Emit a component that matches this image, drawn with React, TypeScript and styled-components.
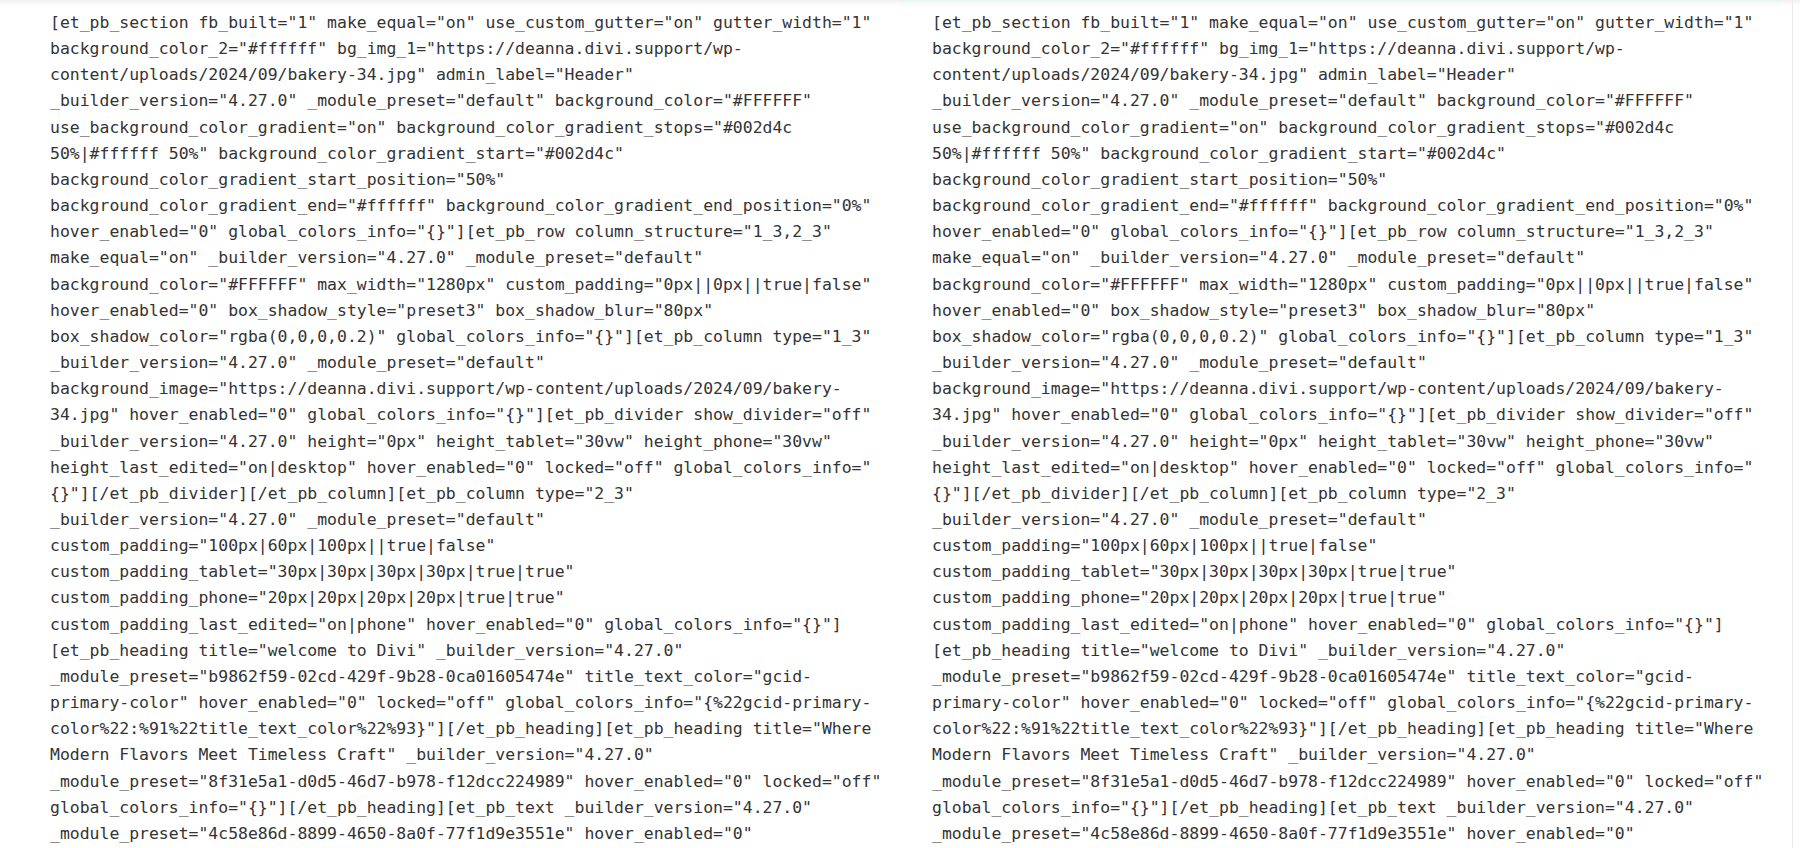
import React from "react";
import styled, { createGlobalStyle } from "styled-components";

const GlobalStyle = createGlobalStyle`
  html, body {
    margin: 0;
    padding: 0;
    background: #ffffff;
  }
  body {
    font-family: "DejaVu Sans Mono", monospace;
  }
`;

const Page = styled.div`
  position: relative;
  display: flex;
  width: 1800px;
  height: 848px;
  overflow: hidden;
  background: linear-gradient(to bottom, #f1f1f1 0px, #fdfdfd 5px, #ffffff 8px);
`;

const Panel = styled.div<{ $width: number; $padLeft: number; $tinted?: boolean }>`
  position: relative;
  box-sizing: border-box;
  width: ${(p) => p.$width}px;
  flex: none;
  padding: 10px 0 0 ${(p) => p.$padLeft}px;
  background: ${(p) =>
    p.$tinted
      ? "linear-gradient(to bottom, #e9f5f1 0px, #f6fbf9 4px, #ffffff 8px)"
      : "transparent"};
  border-radius: ${(p) => (p.$tinted ? "0 0 6px 6px" : "0")};
`;

const EdgeLine = styled.div`
  flex: none;
  margin-left: auto;
  margin-right: 7px;
  width: 1px;
  background: #ececec;
`;

const Code = styled.pre`
  margin: 0;
  font-family: "DejaVu Sans Mono", "Liberation Mono", monospace;
  font-size: 16.45px;
  line-height: 26.15px;
  color: #333333;
  white-space: pre;
`;

const Line = styled.span`
  display: block;
`;

const LINES = [
  `[et_pb_section fb_built="1" make_equal="on" use_custom_gutter="on" gutter_width="1"`,
  `background_color_2="#ffffff" bg_img_1="https://deanna.divi.support/wp-`,
  `content/uploads/2024/09/bakery-34.jpg" admin_label="Header"`,
  `_builder_version="4.27.0" _module_preset="default" background_color="#FFFFFF"`,
  `use_background_color_gradient="on" background_color_gradient_stops="#002d4c`,
  `50%|#ffffff 50%" background_color_gradient_start="#002d4c"`,
  `background_color_gradient_start_position="50%"`,
  `background_color_gradient_end="#ffffff" background_color_gradient_end_position="0%"`,
  `hover_enabled="0" global_colors_info="{}"][et_pb_row column_structure="1_3,2_3"`,
  `make_equal="on" _builder_version="4.27.0" _module_preset="default"`,
  `background_color="#FFFFFF" max_width="1280px" custom_padding="0px||0px||true|false"`,
  `hover_enabled="0" box_shadow_style="preset3" box_shadow_blur="80px"`,
  `box_shadow_color="rgba(0,0,0,0.2)" global_colors_info="{}"][et_pb_column type="1_3"`,
  `_builder_version="4.27.0" _module_preset="default"`,
  `background_image="https://deanna.divi.support/wp-content/uploads/2024/09/bakery-`,
  `34.jpg" hover_enabled="0" global_colors_info="{}"][et_pb_divider show_divider="off"`,
  `_builder_version="4.27.0" height="0px" height_tablet="30vw" height_phone="30vw"`,
  `height_last_edited="on|desktop" hover_enabled="0" locked="off" global_colors_info="`,
  `{}"][/et_pb_divider][/et_pb_column][et_pb_column type="2_3"`,
  `_builder_version="4.27.0" _module_preset="default"`,
  `custom_padding="100px|60px|100px||true|false"`,
  `custom_padding_tablet="30px|30px|30px|30px|true|true"`,
  `custom_padding_phone="20px|20px|20px|20px|true|true"`,
  `custom_padding_last_edited="on|phone" hover_enabled="0" global_colors_info="{}"]`,
  `[et_pb_heading title="welcome to Divi" _builder_version="4.27.0"`,
  `_module_preset="b9862f59-02cd-429f-9b28-0ca01605474e" title_text_color="gcid-`,
  `primary-color" hover_enabled="0" locked="off" global_colors_info="{%22gcid-primary-`,
  `color%22:%91%22title_text_color%22%93}"][/et_pb_heading][et_pb_heading title="Where`,
  `Modern Flavors Meet Timeless Craft" _builder_version="4.27.0"`,
  `_module_preset="8f31e5a1-d0d5-46d7-b978-f12dcc224989" hover_enabled="0" locked="off"`,
  `global_colors_info="{}"][/et_pb_heading][et_pb_text _builder_version="4.27.0"`,
  `_module_preset="4c58e86d-8899-4650-8a0f-77f1d9e3551e" hover_enabled="0"`,
];

const CodeBlock: React.FC = () => (
  <Code>
    {LINES.map((l, i) => (
      <Line key={i}>{l}</Line>
    ))}
  </Code>
);

export default function App() {
  return (
    <>
      <GlobalStyle />
      <Page>
        <Panel $width={900} $padLeft={50}>
          <CodeBlock />
        </Panel>
        <Panel $width={880} $padLeft={32} $tinted>
          <CodeBlock />
        </Panel>
        <EdgeLine />
      </Page>
    </>
  );
}
